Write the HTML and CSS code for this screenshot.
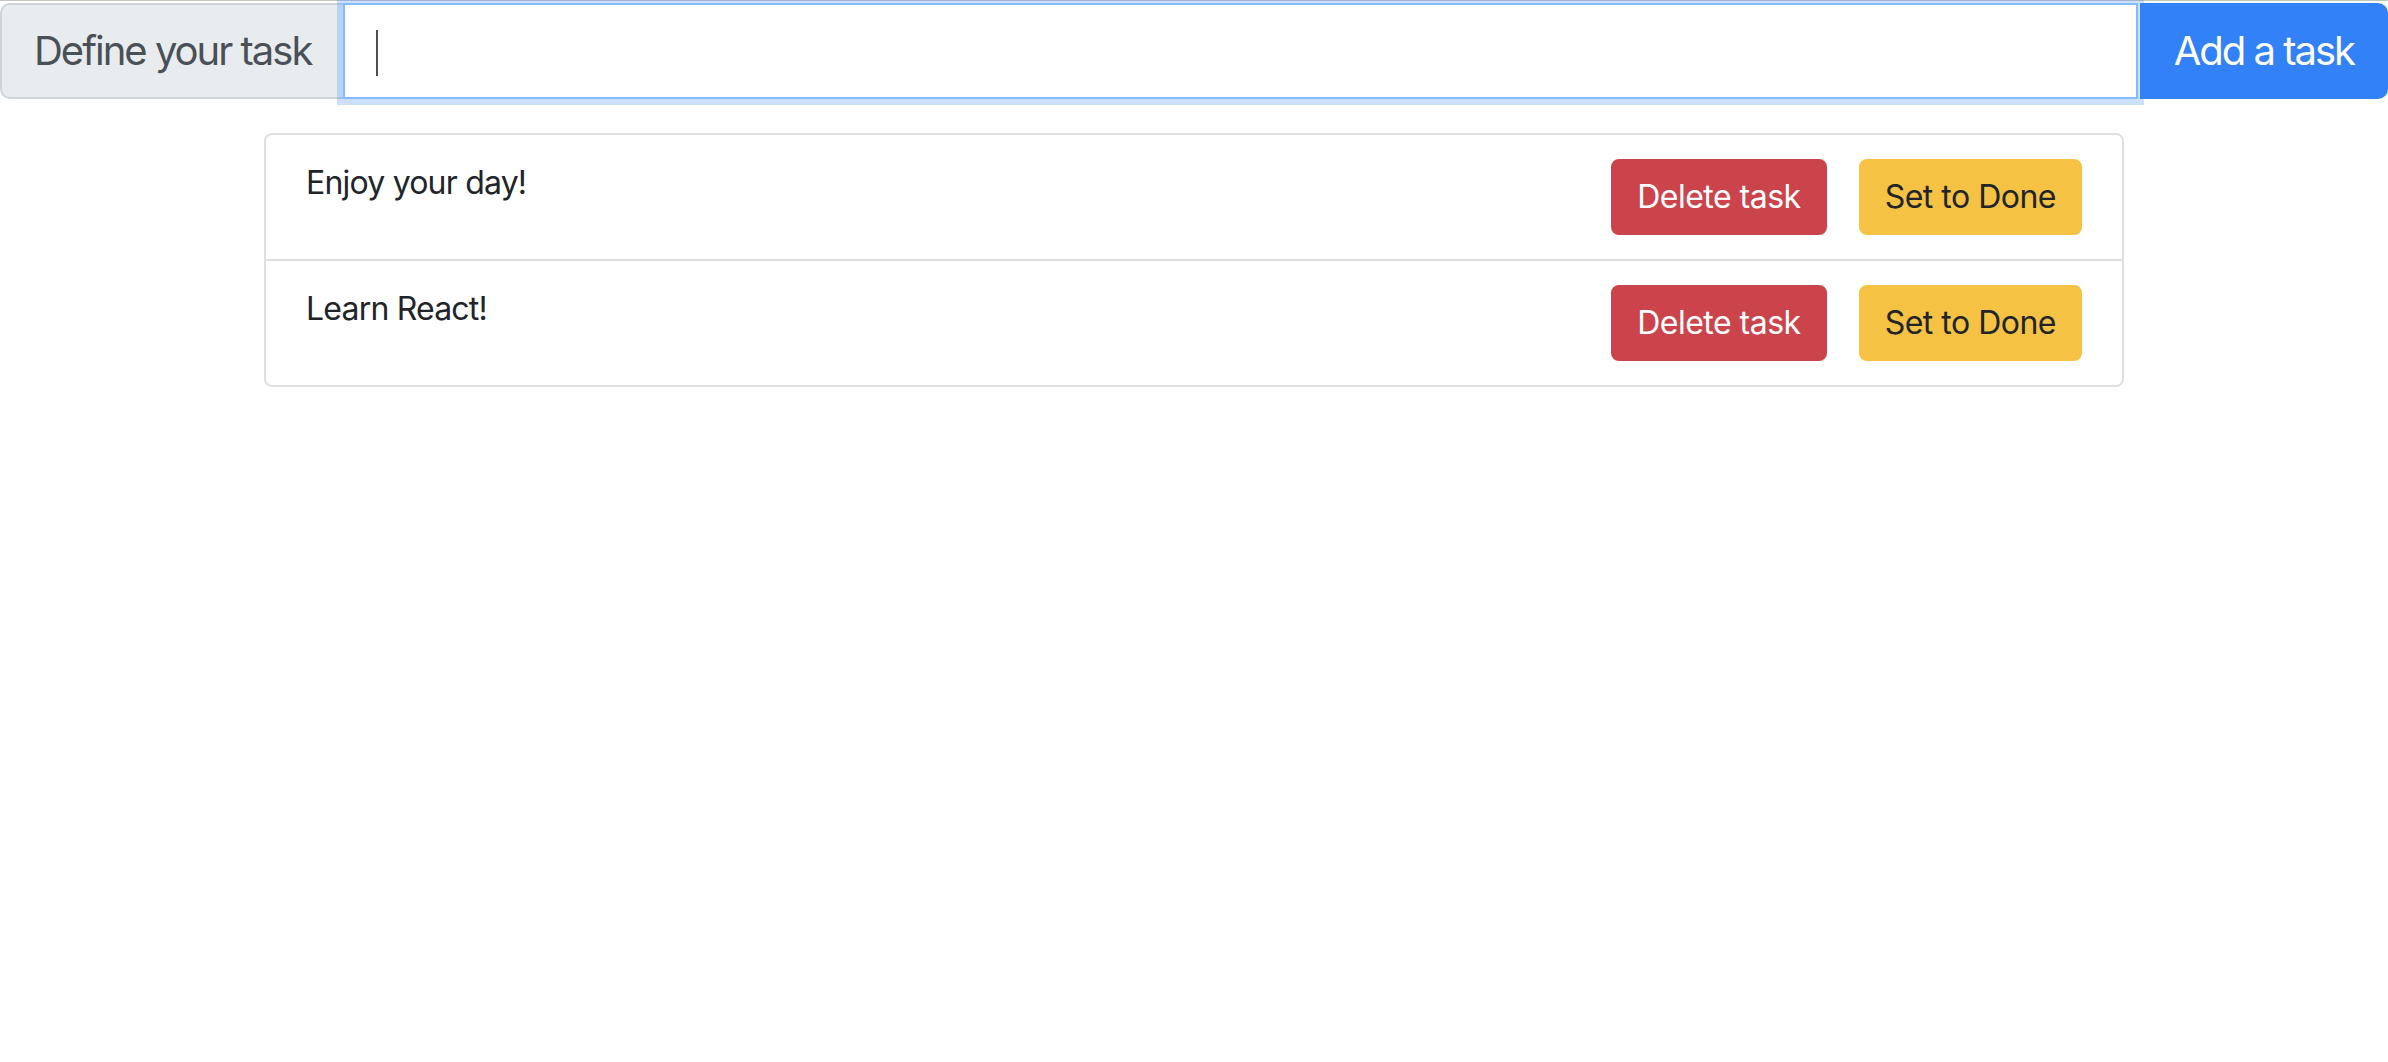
FILE: index.html
```html
<!DOCTYPE html>
<html lang="en">
<head>
<meta charset="utf-8">
<title>Tasks</title>
<link rel="stylesheet" href="styles.css">
</head>
<body>
<div class="page">
  <div class="input-group">
    <span class="prepend">Define your task</span>
    <div class="input-wrap">
      <input class="task-input" type="text" aria-label="Define your task">
      <span class="caret"></span>
    </div>
    <button class="btn-add" type="button">Add a task</button>
  </div>
  <div class="container">
    <ul class="task-list">
      <li class="task-item">
        <span class="task-text">Enjoy your day!</span>
        <div class="actions">
          <button class="btn btn-danger" type="button">Delete task</button>
          <button class="btn btn-warning" type="button">Set to Done</button>
        </div>
      </li>
      <li class="task-item">
        <span class="task-text">Learn React!</span>
        <div class="actions">
          <button class="btn btn-danger" type="button">Delete task</button>
          <button class="btn btn-warning" type="button">Set to Done</button>
        </div>
      </li>
    </ul>
  </div>
</div>
</body>
</html>
```
FILE: styles.css
```css
* { box-sizing: border-box; }
html, body { margin: 0; padding: 0; background: #fff; }
body {
  font-family: Inter, "Noto Sans", "Liberation Sans", sans-serif;
  color: #212529;
  font-size: 32px;
  line-height: 48px;
  letter-spacing: -0.8px;
}
.page {
  border-top: 1px solid #c4c4c4;
  padding-top: 2px;
}
.input-group {
  display: flex;
  align-items: stretch;
  width: 100%;
  font-size: 40px;
  line-height: 60px;
  letter-spacing: -2px;
}
.prepend {
  flex: none;
  padding: 16px 32px;
  background: #e9ecef;
  color: #495057;
  border: 2px solid #ced4da;
  border-right: none;
  border-radius: 10px 0 0 10px;
  white-space: nowrap;
}
.input-wrap {
  flex: 1 1 auto;
  min-width: 0;
  display: flex;
  position: relative;
  z-index: 2;
}
.task-input {
  flex: 1 1 auto;
  min-width: 0;
  margin: 0;
  padding: 16px 32px;
  font: inherit;
  letter-spacing: inherit;
  color: #495057;
  background: #fff;
  border: 2px solid #80bdff;
  border-radius: 0;
  outline: none;
  box-shadow: 0 0 0 6px rgba(50, 130, 246, 0.25);
}
.caret {
  position: absolute;
  left: 33px;
  top: 27px;
  width: 2px;
  height: 46px;
  background: #495057;
}
.btn-add {
  flex: none;
  margin: 0 0 0 2px;
  padding: 16px 32px;
  font: inherit;
  letter-spacing: inherit;
  color: #fff;
  background: #3281f6;
  border: 2px solid #3281f6;
  border-radius: 0 10px 10px 0;
}
.container {
  max-width: 1920px;
  margin: 34px auto 0;
  padding: 0 30px;
}
.task-list {
  list-style: none;
  margin: 0;
  padding: 0;
  border: 2px solid #dfdfdf;
  border-radius: 8px;
}
.task-item {
  display: flex;
  justify-content: space-between;
  align-items: flex-start;
  padding: 24px 40px;
}
.task-item + .task-item {
  border-top: 2px solid #dfdfdf;
}
.task-text { color: #212529; }
.actions {
  display: flex;
  gap: 32px;
}
.btn {
  margin: 0;
  padding: 12px 24px;
  font: inherit;
  letter-spacing: -0.5px;
  border: 2px solid transparent;
  border-radius: 8px;
  white-space: nowrap;
}
.btn-danger {
  background: #cc444b;
  border-color: #cc444b;
  color: #fff;
}
.btn-warning {
  background: #f5c243;
  border-color: #f5c243;
  color: #212529;
}
```
